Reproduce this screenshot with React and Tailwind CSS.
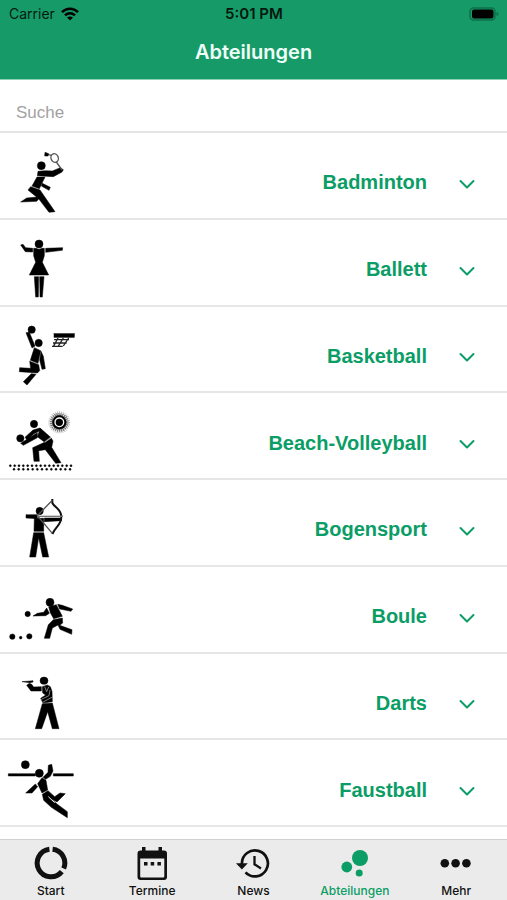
import React from "react";

const Badminton = () => (
  <>
    <circle cx="124" cy="91" r="12" />
    <path d="M114 108L137 106L157 107L181 97L190 103L186 110L160 124L112 121Z" />
    <path d="M111 125L135 125L118 160L96 152Z" />
    <path d="M127 144L151 156L147 165L124 152Z" />
    <path d="M92 154L120 164L165 229L147 231L116 190L84 164Z" />
    <path d="M62 200L80 188L112 185L117 190L110 198Z" />
    <ellipse cx="164" cy="68" rx="11" ry="13" transform="rotate(-20 164 68)" fill="none" stroke="#555" strokeWidth="4" />
    <path d="M169 80L186 104M145 58L155 60" fill="none" stroke="#555" strokeWidth="4" />
    <path d="M135 51L146 55L144 62L134 62Z" />
  </>
);

const Ballett = () => (
  <>
    <circle cx="117" cy="65" r="12" />
    <path d="M62 68L69 66L77 76L98 78L98 89L76 88Z" />
    <path d="M137 78L188 76L187 84L137 90Z" />
    <path d="M101 78L109 78Q117 84 125 78L133 78L133 100L127 120L146 158L88 158L107 120L101 100Z" />
    <path d="M103 163L116 163L115 224L107 224Z" />
    <path d="M119 163L132 163L127 224L120 224Z" />
  </>
);

const Basketball = () => (
  <>
    <circle cx="95" cy="61" r="11" />
    <circle cx="116" cy="101" r="11" />
    <path d="M78 70L88 69L105 110L96 116Z" />
    <path d="M103 115L122 124L114 162L91 153Z" />
    <path d="M123 126L130 141L136 178L126 180L119 152Z" />
    <path d="M89 156L116 166L119 184L112 191L58 187L59 175L92 177Z" />
    <path d="M94 193L108 195L81 227L70 217Z" />
    <rect x="162" y="73" width="61" height="11" />
    <path d="M174 86L160 112M190 86L174 112M206 86L190 110M162 91H207M159 101H200M156 111H188" fill="none" stroke="#222" strokeWidth="4" />
  </>
);

const upperSand = Array.from({ length: 15 }, (_, i) => 31 + i * 13);
const lowerSand = Array.from({ length: 13 }, (_, i) => 42 + i * 14);

const BeachVolleyball = () => (
  <>
    <circle cx="178" cy="78" r="31" fill="none" stroke="#bbb" strokeWidth="4" strokeDasharray="3 3" />
    <circle cx="178" cy="78" r="25" fill="none" stroke="#777" strokeWidth="7" strokeDasharray="4 2" />
    <circle cx="178" cy="78" r="21" />
    <circle cx="178" cy="78" r="13" fill="none" stroke="#fff" strokeWidth="4" />
    <circle cx="102" cy="83" r="11" />
    <circle cx="61" cy="126" r="11" />
    <path d="M75 123L99 101L120 95L124 101L101 113L82 132Z" />
    <path d="M62 141L112 109L112 124L70 147Z" />
    <path d="M121 96L151 122L132 136L112 121Z" />
    <path d="M153 124L159 134L155 153L183 199L167 201L136 160L116 163L118 195L102 195L98 154L129 140Z" />
    <path d="M134 138L153 125" fill="none" stroke="#fff" strokeWidth="2" />
    {upperSand.map((x) => <circle key={x} cx={x} cy="208" r="3" />)}
    {lowerSand.map((x) => <circle key={x} cx={x} cy="219" r="3" />)}
  </>
);

const Bogensport = () => (
  <>
    <circle cx="119" cy="86" r="11" />
    <path d="M78 97L112 97L112 109L78 107Z" />
    <path d="M103 108L131 108L131 147L102 147Z" />
    <path d="M133 107L184 107L184 115L133 118Z" />
    <path d="M101 151L131 151L146 224L128 224L116 166L107 224L89 224Z" />
    <path d="M157 50V62C164 76 184 80 184 103C184 128 166 134 157 155" fill="none" stroke="#111" strokeWidth="6" />
    <path d="M157 54L112 100L157 153" fill="none" stroke="#555" strokeWidth="4" />
    <path d="M112 102H189" fill="none" stroke="#777" strokeWidth="4" />
  </>
);

const Boule = () => (
  <>
    <circle cx="150" cy="99" r="12" />
    <circle cx="83" cy="134" r="8" />
    <circle cx="37" cy="202" r="8" />
    <circle cx="62" cy="205" r="4" />
    <circle cx="88" cy="201" r="8" />
    <path d="M99 140L112 132L131 129L140 116L148 132L137 139Z" />
    <path d="M146 112L169 106L187 141L161 148L151 130Z" />
    <path d="M173 105L187 108L218 119L213 126L179 119Z" />
    <path d="M160 151L187 146L188 161L179 168L216 181L215 195L180 180L174 167L157 176L149 207L133 207L145 166Z" />
  </>
);

const Darts = () => (
  <>
    <path d="M66 76L90 74L99 73L99 77L90 79Z" />
    <ellipse cx="132" cy="73" rx="12" ry="11" />
    <path d="M80 87L88 81L95 84L101 92L124 91L124 104L93 104Z" />
    <path d="M127 91L142 86L151 91L156 105L157 136L129 140L122 126L137 116L128 110Z" />
    <path d="M134 91L140 106L146 92M150 101L147 118L124 129M128 138L157 122" fill="none" stroke="#bbb" strokeWidth="2" />
    <path d="M127 142L157 140L177 217L157 217L143 166L125 217L106 217Z" />
  </>
);

const Faustball = () => (
  <>
    <circle cx="76" cy="64" r="12" />
    <circle cx="118" cy="90" r="12" />
    <path d="M25 91H106V98H25ZM160 91H220V98H160Z" />
    <path d="M145 66L155 63L159 83L151 99L137 108L129 102L144 87Z" />
    <path d="M126 103L138 111L143 140L126 149L113 121Z" />
    <path d="M106 122L113 130L96 149L77 149Z" />
    <path d="M127 153L144 142L164 160L180 149L196 151L171 176L153 166L171 182L202 205L202 223L154 192L131 171Z" />
    <path d="M145 160L164 178" fill="none" stroke="#fff" strokeWidth="3" />
  </>
);

const sections = [
  ["Badminton", Badminton],
  ["Ballett", Ballett],
  ["Basketball", Basketball],
  ["Beach-Volleyball", BeachVolleyball],
  ["Bogensport", Bogensport],
  ["Boule", Boule],
  ["Darts", Darts],
  ["Faustball", Faustball],
];

const StartIcon = () => (
  <path d="M19.6 4.3A13.8 13.8 0 0 1 30.7 23.4M28.8 26.6A13.8 13.8 0 1 1 16.4 4.3" fill="none" stroke="currentColor" strokeWidth="5" />
);
const TermineIcon = () => (
  <>
    <path fillRule="evenodd" d="M8 2H11.5V5.5H24.5V2H28V5.5H30A3 3 0 0 1 33 8.5V32A3 3 0 0 1 30 35H6.5A3 3 0 0 1 3.5 32V8.5A3 3 0 0 1 6.5 5.5H8ZM6.2 13.5V31.5Q6.2 32.5 7.2 32.5H29.3Q30.3 32.5 30.3 31.5V13.5Z" />
    <path d="M10 17H13.500V20.500H10ZM16.700 17H20.200V20.500H16.700ZM23.400 17H26.900V20.500H23.400Z" />
  </>
);
const NewsIcon = () => (
  <>
    <path d="M6.9 19V18.3A13 13 0 1 1 10.5 27.4" fill="none" stroke="currentColor" strokeWidth="2.7" />
    <path d="M1 18.2H12.8L6.9 24.5Z" />
    <path d="M19.5 11V19.3L26 23.5" fill="none" stroke="currentColor" strokeWidth="2.3" />
  </>
);
const AbteilungenIcon = () => (
  <>
    <circle cx="23" cy="13" r="8" />
    <circle cx="9.8" cy="22" r="5.4" />
    <circle cx="22.2" cy="28" r="3.5" />
  </>
);
const MehrIcon = () => (
  <>
    <circle cx="6.8" cy="18.3" r="4.3" />
    <circle cx="17.6" cy="18.3" r="4.3" />
    <circle cx="28.4" cy="18.3" r="4.3" />
  </>
);

const tabs = [
  ["Start", StartIcon],
  ["Termine", TermineIcon],
  ["News", NewsIcon],
  ["Abteilungen", AbteilungenIcon],
  ["Mehr", MehrIcon],
];

export default function App() {
  return (
    <div className="flex min-h-screen flex-col bg-white font-['Inter',sans-serif] text-black">
      <header className="border-b border-[#8fd0b4] bg-[#169b68]">
        <div className="grid h-7 grid-cols-3 items-center pr-2 pl-[9px] text-[#04180f]">
          <div className="flex items-center gap-[6px] text-sm">
            <span>Carrier</span>
            <svg className="h-[14px] w-[18px]" viewBox="0 0 18 14" fill="none" stroke="#000" strokeWidth="2.6" aria-hidden="true">
              <path d="M1 5.2C5.5 .6 12.5 .6 17 5.2M4 8.4C7 5.6 11 5.6 14 8.4" />
              <path d="M9 13.5L6 10.6Q9 8.3 12 10.6Z" fill="#000" stroke="none" />
            </svg>
          </div>
          <span className="text-center text-[15px] leading-5 font-semibold">5:01 PM</span>
          <svg className="h-[14px] w-[30px] justify-self-end" viewBox="0 0 30 14" aria-hidden="true">
            <rect x="1" y="1" width="25" height="12" rx="3.5" fill="none" stroke="#0e7049" strokeWidth="1.5" />
            <rect x="3" y="2.5" width="21.5" height="9" rx="2" fill="#000" />
            <path d="M27.5 4.8Q29.5 5.5 29.5 7T27.5 9.2Z" fill="#0e7049" />
          </svg>
        </div>
        <h1 className="h-[51px] pt-2 text-center text-xl leading-8 font-semibold text-[#effff8]">Abteilungen</h1>
      </header>

      <input
        type="search"
        aria-label="Suche"
        placeholder="Suche"
        className="h-[53px] w-full appearance-none border-b-2 border-[#e4e4e4] px-4 pt-[14px] font-['Liberation_Sans',sans-serif] text-[17px] outline-none placeholder:text-[#a2a2a2]"
      />

      <main className="flex flex-1 flex-col pb-3">
        <ul className="grid flex-1 auto-rows-fr">
          {sections.map(([name, Figure]) => (
            <li key={name} className="border-b-2 border-[#e6e6e6]">
              <button type="button" className="flex h-full w-full items-center pt-3 pr-8 text-[#0b9d66]">
                <svg className="h-[66px] w-20 shrink-0 text-black" viewBox="0 38 240 198" fill="currentColor" stroke="currentColor" strokeWidth="1.5" aria-hidden="true">
                  <Figure />
                </svg>
                <span className="mt-[2px] flex-1 text-right font-['Liberation_Sans',sans-serif] text-xl leading-6 font-bold">{name}</span>
                <svg className="mt-[5px] ml-8 h-4 w-4" viewBox="0 0 16 16" fill="none" stroke="currentColor" strokeWidth="2" strokeLinecap="round" strokeLinejoin="round" aria-hidden="true">
                  <path d="M1.500 5L8 11.500L14.500 5" />
                </svg>
              </button>
            </li>
          ))}
        </ul>
      </main>

      <nav className="grid grid-cols-5 border-t border-[#d2d2d2] bg-[#ebebeb]">
        {tabs.map(([name, Icon]) => (
          <button
            key={name}
            type="button"
            aria-current={name === "Abteilungen" ? "page" : undefined}
            className="flex h-[60px] flex-col items-center pt-[5px] text-[#111] aria-[current=page]:text-[#0b9d66]"
          >
            <svg className="h-9 w-9 shrink-0" viewBox="0 0 36 36" fill="currentColor" aria-hidden="true">
              <Icon />
            </svg>
            <span className="text-xs leading-5 font-medium">{name}</span>
          </button>
        ))}
      </nav>
    </div>
  );
}
